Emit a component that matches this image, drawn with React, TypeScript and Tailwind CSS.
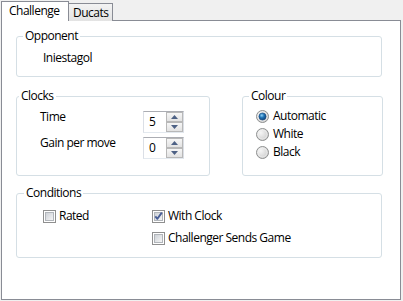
import React from "react";

function Radio({ checked }: { checked?: boolean }) {
  return (
    <svg width="13" height="13" viewBox="0 0 13 13" className="shrink-0">
      <defs>
        <radialGradient id="rOff" cx="0.35" cy="0.35" r="0.75">
          <stop offset="0" stopColor="#f6f6f6" />
          <stop offset="0.6" stopColor="#dcdcdc" />
          <stop offset="1" stopColor="#c8c8c8" />
        </radialGradient>
        <radialGradient id="rOn" cx="0.4" cy="0.35" r="0.7">
          <stop offset="0" stopColor="#8fd0f5" />
          <stop offset="0.45" stopColor="#1f73b5" />
          <stop offset="1" stopColor="#0d3d73" />
        </radialGradient>
      </defs>
      <circle cx="6.5" cy="6.5" r="6" fill="url(#rOff)" stroke="#8e9090" strokeWidth="1" />
      <circle cx="6.5" cy="6.5" r="4.5" fill="none" stroke="#f4f4f4" strokeWidth="0.8" opacity="0.7" />
      {checked && <circle cx="6.5" cy="6.5" r="3.6" fill="url(#rOn)" stroke="#1b4a80" strokeWidth="0.6" />}
    </svg>
  );
}

function Check({ checked }: { checked?: boolean }) {
  return (
    <svg width="13" height="13" viewBox="0 0 13 13" className="shrink-0">
      <defs>
        <linearGradient id="cbIn" x1="0" y1="0" x2="1" y2="1">
          <stop offset="0" stopColor="#cbcfd5" />
          <stop offset="1" stopColor="#f7f7f7" />
        </linearGradient>
      </defs>
      <rect x="0.5" y="0.5" width="12" height="12" fill="#ffffff" stroke="#8f8f8f" />
      <rect x="2.5" y="2.5" width="8" height="8" fill="url(#cbIn)" stroke="#b1b5ba" />
      {checked && (
        <path d="M3.3 6.4 L5.4 8.8 L9.8 2.6" fill="none" stroke="#4a5f97" strokeWidth="1.9" strokeLinejoin="round" />
      )}
    </svg>
  );
}

function Tri({ up }: { up?: boolean }) {
  return (
    <svg width="7" height="4" viewBox="0 0 7 4">
      {up ? <polygon points="0,4 3.5,0 7,4" fill="#4d6185" /> : <polygon points="0,0 3.5,4 7,0" fill="#4d6185" />}
    </svg>
  );
}

function Spinner({ value }: { value: string }) {
  return (
    <div className="mt-[2px] flex h-[22px] w-[41px] border border-t-[#abadb3] border-l-[#dbdfe6] border-r-[#dbdfe6] border-b-[#e3e9ef] bg-white">
      <div className="flex-1 pl-[5px] leading-[20px]">{value}</div>
      <div className="flex w-[17px] flex-col">
        <div className="flex h-[10px] items-center justify-center border border-[#b8b8b8] bg-gradient-to-b from-[#f6f6f6] to-[#e2e2e2]">
          <Tri up />
        </div>
        <div className="flex h-[10px] items-center justify-center border border-[#b8b8b8] bg-gradient-to-b from-[#f6f6f6] to-[#e2e2e2]">
          <Tri />
        </div>
      </div>
    </div>
  );
}

export default function App() {
  return (
    <div className="h-[301px] w-[403px] bg-[#f0f0f0] font-['Open_Sans',sans-serif] text-[12px] leading-[16px] tracking-[-0.5px] text-black">
      <div className="flex h-[21px] items-end pl-[1px]">
        <div className="relative z-10 h-[20px] w-[68px] border border-b-0 border-[#898c95] bg-white pl-[7px] leading-[18px]">
          Challenge
        </div>
        <div className="h-[18px] w-[44px] border border-b-0 border-l-0 border-[#898c95] bg-gradient-to-b from-[#f3f3f3] to-[#e3e3e3] pl-[4px] leading-[17px]">
          Ducats
        </div>
      </div>
      <div className="-mt-px ml-[1px] h-[280px] w-[400px] border border-[#898c95] bg-white pl-[14px] pt-[7px]">
        <fieldset className="h-[49px] w-[366px] rounded-[3px] border border-[#d5dfe5]">
          <legend className="ml-[6px] px-[2px]">Opponent</legend>
          <div className="mt-[6px] pl-[26px]">Iniestagol</div>
        </fieldset>

        <div className="mt-[11px] flex gap-[32px]">
          <fieldset className="h-[88px] w-[194px] rounded-[3px] border border-[#d5dfe5]">
            <legend className="ml-[2px] px-[2px]">Clocks</legend>
            <div className="mt-[5px] flex flex-col gap-[2px] pl-[23px]">
              <div className="flex items-start">
                <div className="w-[103px]">Time</div>
                <Spinner value="5" />
              </div>
              <div className="flex items-start">
                <div className="w-[103px]">Gain per move</div>
                <Spinner value="0" />
              </div>
            </div>
          </fieldset>

          <fieldset className="h-[88px] w-[141px] rounded-[3px] border border-[#d5dfe5]">
            <legend className="ml-[6px] px-[2px]">Colour</legend>
            <div className="mt-[3px] flex flex-col pl-[13px]">
              <div className="flex h-[18px] items-center gap-[4px]">
                <Radio checked />
                <span>Automatic</span>
              </div>
              <div className="flex h-[18px] items-center gap-[4px]">
                <Radio />
                <span>White</span>
              </div>
              <div className="flex h-[18px] items-center gap-[4px]">
                <Radio />
                <span>Black</span>
              </div>
            </div>
          </fieldset>
        </div>

        <fieldset className="mt-[9px] h-[73px] w-[366px] rounded-[3px] border border-[#d5dfe5]">
          <legend className="ml-[7px] px-[2px]">Conditions</legend>
          <div className="mt-[4px] flex pl-[26px]">
            <div className="w-[109px]">
              <div className="flex h-[22px] items-center gap-[3px]">
                <Check />
                <span>Rated</span>
              </div>
            </div>
            <div className="flex flex-col">
              <div className="flex h-[22px] items-center gap-[3px]">
                <Check checked />
                <span>With Clock</span>
              </div>
              <div className="flex h-[22px] items-center gap-[3px]">
                <Check />
                <span>Challenger Sends Game</span>
              </div>
            </div>
          </div>
        </fieldset>
      </div>
    </div>
  );
}
